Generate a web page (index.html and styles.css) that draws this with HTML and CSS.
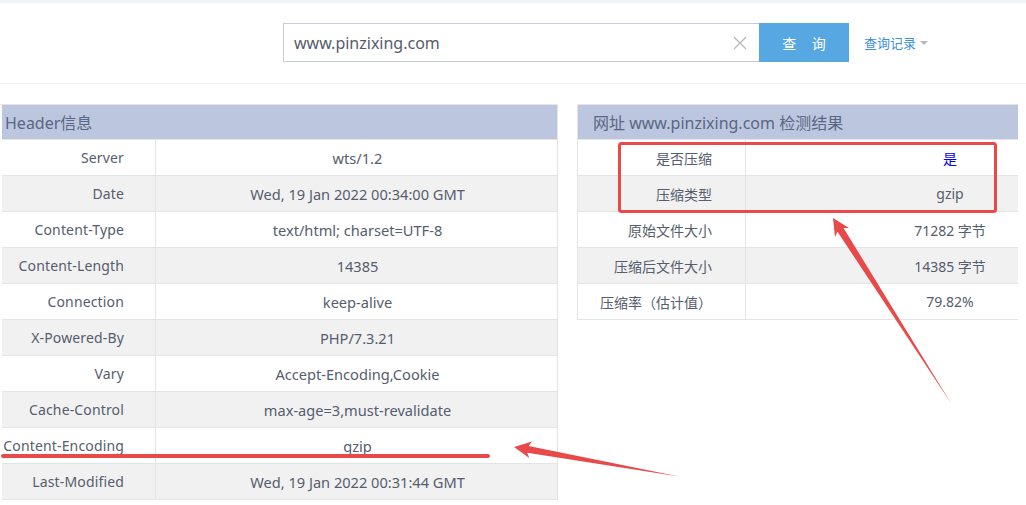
FILE: index.html
```html
<!DOCTYPE html>
<html lang="zh-CN">
<head>
<meta charset="utf-8">
<title>Gzip检测</title>
<link rel="stylesheet" href="styles.css">
</head>
<body>
<div class="topstrip"></div>
<div class="searchbar">
  <div class="search">
    <div class="input">
      <span class="query">www.pinzixing.com</span>
      <svg class="clear" width="14" height="14" viewBox="0 0 14 14"><path d="M1 1L13 13M13 1L1 13" stroke="#b5b5b5" stroke-width="1.2" fill="none"/></svg>
    </div>
    <div class="btn">查 询</div>
    <div class="history">查询记录<span class="caret"></span></div>
  </div>
</div>
<div class="main">
  <div class="leftwrap">
    <div class="table left">
      <div class="thead">Header信息</div>
      <div class="row"><div class="k"><span>Server</span></div><div class="v">wts/1.2</div></div>
      <div class="row alt"><div class="k"><span>Date</span></div><div class="v">Wed, 19 Jan 2022 00:34:00 GMT</div></div>
      <div class="row"><div class="k"><span>Content-Type</span></div><div class="v">text/html; charset=UTF-8</div></div>
      <div class="row alt"><div class="k"><span>Content-Length</span></div><div class="v">14385</div></div>
      <div class="row"><div class="k"><span>Connection</span></div><div class="v">keep-alive</div></div>
      <div class="row alt"><div class="k"><span>X-Powered-By</span></div><div class="v">PHP/7.3.21</div></div>
      <div class="row"><div class="k"><span>Vary</span></div><div class="v">Accept-Encoding,Cookie</div></div>
      <div class="row alt"><div class="k"><span>Cache-Control</span></div><div class="v">max-age=3,must-revalidate</div></div>
      <div class="row"><div class="k"><span>Content-Encoding</span></div><div class="v">gzip</div></div>
      <div class="row alt"><div class="k"><span>Last-Modified</span></div><div class="v">Wed, 19 Jan 2022 00:31:44 GMT</div></div>
    </div>
  </div>
  <div class="rightwrap">
    <div class="table right">
      <div class="thead rhead">网址 www.pinzixing.com 检测结果</div>
      <div class="row"><div class="k"><span>是否压缩</span></div><div class="v"><span class="yes">是</span></div></div>
      <div class="row alt"><div class="k"><span>压缩类型</span></div><div class="v">gzip</div></div>
      <div class="row"><div class="k"><span>原始文件大小</span></div><div class="v">71282 字节</div></div>
      <div class="row alt"><div class="k"><span>压缩后文件大小</span></div><div class="v">14385 字节</div></div>
      <div class="row"><div class="k"><span>压缩率（估计值）</span></div><div class="v">79.82%</div></div>
    </div>
  </div>
</div>
<svg class="marks" width="1026" height="505" viewBox="0 0 1026 505">
  <rect x="619.5" y="143.5" width="376" height="68" rx="2" fill="none" stroke="#e84a4a" stroke-width="3"/>
  <line x1="3" y1="456" x2="488" y2="456" stroke="#e84a4a" stroke-width="4" stroke-linecap="round"/>
  <polygon points="514,447 532,441.5 528.6,446 679,476.5 527.2,452.8 529.3,458" fill="#e84a4a"/>
  <polygon points="833,218 849,228 843.5,228 951.5,404 837.5,231.7 835,237" fill="#e84a4a"/>
</svg>
</body>
</html>
```
FILE: styles.css
```css
html, body {
  margin: 0;
  padding: 0;
  background: #fff;
}
body {
  width: 1026px;
  height: 505px;
  overflow: hidden;
  position: relative;
  font-family: "Noto Sans", "Noto Sans CJK SC", sans-serif;
  font-size: 14px;
  color: #555d6e;
}
.topstrip {
  height: 3px;
  background: #eef4f9;
}
.searchbar {
  height: 80px;
  border-bottom: 1px solid #efefef;
}
.search {
  display: flex;
  align-items: center;
  padding: 20px 0 0 283px;
}
.input {
  height: 37px;
  border: 1px solid #c6ccda;
  border-right: none;
  display: flex;
  align-items: center;
  justify-content: space-between;
  padding: 0 12px 0 10px;
  width: 453px;
}
.query {
  font-size: 16px;
  color: #555c6c;
}
.clear {
  display: block;
}
.btn {
  width: 90px;
  height: 39px;
  background: #57a8e2;
  color: #fff;
  font-size: 14px;
  display: flex;
  align-items: center;
  justify-content: center;
  letter-spacing: 6px;
  text-indent: 6px;
}
.history {
  margin-left: 15px;
  font-size: 13px;
  color: #3b8fe0;
  display: flex;
  align-items: center;
}
.caret {
  margin-left: 4px;
  border-left: 4px solid transparent;
  border-right: 4px solid transparent;
  border-top: 4px solid #b8b8b8;
}
.main {
  display: flex;
  align-items: flex-start;
  padding-top: 20px;
}
.leftwrap {
  flex: none;
  width: 558px;
}
.rightwrap {
  flex: none;
  margin-left: 19px;
  width: 441px;
  overflow: hidden;
}
.table {
  border: 1px solid #e4e4e4;
  border-bottom: none;
}
.left {
  border-left: none;
}
.left .thead {
  margin-left: 2px;
}
.right {
  width: 576px;
  border-right: none;
}
.thead {
  height: 34px;
  background: #bcc6de;
  border-bottom: 1px solid #e4e4e4;
  font-size: 16px;
  color: #5a6683;
  display: flex;
  align-items: center;
  padding-left: 3px;
}
.rhead {
  padding-left: 15px;
}
.row {
  display: grid;
  grid-template-columns: 156px 1fr;
  height: 35px;
  border-bottom: 1px solid #e4e4e4;
  background: #fff;
}
.left .row {
  margin-left: 2px;
  grid-template-columns: 154px 1fr;
}
.right .row {
  grid-template-columns: 168px 1fr;
}
.row.alt {
  background: #f1f1f1;
}
.k {
  border-right: 1px solid #e4e4e4;
  display: flex;
  align-items: center;
  justify-content: flex-end;
  padding-right: 31px;
  white-space: nowrap;
  overflow: hidden;
  min-width: 0;
}
.k span {
  flex: none;
}
.left .k span {
  letter-spacing: 0.15px;
}
.right .k {
  padding-right: 33px;
}
.v {
  display: flex;
  align-items: center;
  justify-content: center;
  white-space: nowrap;
}
.left .v {
  font-size: 14.6px;
  padding-left: 2px;
}
.yes {
  color: #0000ee;
}
.marks {
  position: absolute;
  left: 0;
  top: 0;
  pointer-events: none;
}
```
